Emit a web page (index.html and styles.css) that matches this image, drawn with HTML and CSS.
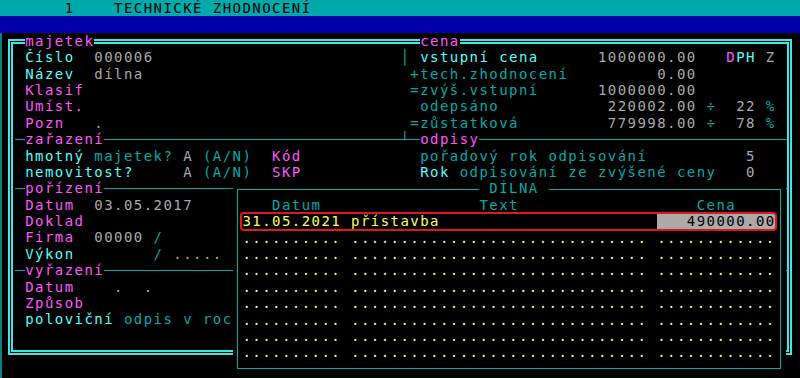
FILE: index.html
```html
<!DOCTYPE html>
<html lang="cs">
<head>
    <meta charset="UTF-8">
    <meta name="viewport" content="width=device-width, initial-scale=1.0">
    <title>Technické zhodnocení</title>
    <link rel="stylesheet" href="styles.css">
</head>
<body>
<div class="screen">
    <div class="title">      1    TECHNICKÉ ZHODNOCENÍ</div>
    <div class="menu"></div>

    <div class="desk">
        <div class="frame">
            <div class="grid">
                <div class="l"><span class="mg lbl">majetek</span></div>
                <div class="r">  <span class="mg lbl">cena</span></div>

                <div class="l"><span class="lc">Číslo</span>  <span class="gr">000006</span></div>
                <div class="r"><span class="cy">│</span> <span class="lc">vstupní cena</span>      <span class="gr">1000000.00</span>   <span class="mg">D</span><span class="lc">PH</span> <span class="gr">Z</span></div>

                <div class="l"><span class="lc">Název</span>  <span class="gr">dílna</span></div>
                <div class="r"> <span class="cy">+tech.zhodnocení</span>         <span class="gr">0.00</span></div>

                <div class="l"><span class="mg">Klasif</span></div>
                <div class="r"> <span class="cy">=zvýš.vstupní</span>      <span class="gr">1000000.00</span></div>

                <div class="l"><span class="mg">Umíst.</span></div>
                <div class="r">  <span class="cy">odepsáno</span>           <span class="gr">220002.00</span> <span class="cy">÷</span>  <span class="gr">22</span> <span class="cy">%</span></div>

                <div class="l"><span class="mg">Pozn</span>   <span class="gr">.</span></div>
                <div class="r"> <span class="cy">=zůstatková</span>         <span class="gr">779998.00</span> <span class="cy">÷</span>  <span class="gr">78</span> <span class="cy">%</span></div>

                <div class="l rule"><span class="mg lbl">zařazení</span></div>
                <div class="r rule"><span class="cy">╵</span> <span class="mg lbl">odpisy</span></div>

                <div class="l"><span class="lc">hmotný</span> <span class="cy">majetek?</span> <span class="gr">A</span> <span class="cy">(A/N)</span>  <span class="mg">Kód</span></div>
                <div class="r">  <span class="cy">pořadový rok odpisování</span>          <span class="gr">5</span></div>

                <div class="l"><span class="lc">nemovitost?</span>     <span class="gr">A</span> <span class="cy">(A/N)</span>  <span class="mg">SKP</span></div>
                <div class="r">  <span class="lc">Rok</span><span class="cy"> odpisování ze zvýšené ceny</span>   <span class="gr">0</span></div>

                <div class="l rule"><span class="mg lbl">pořízení</span></div>
                <div class="r rule"></div>

                <div class="l"><span class="mg">Datum</span>  <span class="gr">03.05.2017</span></div>
                <div class="r"></div>

                <div class="l"><span class="mg">Doklad</span></div>
                <div class="r"></div>

                <div class="l"><span class="mg">Firma</span>  <span class="gr">00000</span> <span class="cy">/</span></div>
                <div class="r"></div>

                <div class="l"><span class="lc">Výkon</span>        <span class="cy">/</span> <span class="gr">.....</span></div>
                <div class="r"></div>

                <div class="l rule"><span class="mg lbl">vyřazení</span></div>
                <div class="r rule"></div>

                <div class="l"><span class="mg">Datum</span>    <span class="gr">.</span>  <span class="gr">.</span></div>
                <div class="r"></div>

                <div class="l"><span class="mg">Způsob</span></div>
                <div class="r"></div>

                <div class="l"><span class="lc">poloviční</span> <span class="cy">odpis v roc</span></div>
                <div class="r"></div>

                <div class="l"></div>
                <div class="r"></div>
            </div>
        </div>

        <div class="dialog">
            <div class="dlg-box">
                <div class="line dlg-title">                        <span class="lbl cy"> DÍLNA </span></div>
                <div class="line cy">   Datum                Text                  Cena</div>
                <div class="line"><span class="ye">31.05.2021 přístavba</span>                      <span class="field">   490000.00</span></div>
                <div class="line ye">.......... .............................. ............</div>
                <div class="line ye">.......... .............................. ............</div>
                <div class="line ye">.......... .............................. ............</div>
                <div class="line ye">.......... .............................. ............</div>
                <div class="line ye">.......... .............................. ............</div>
                <div class="line ye">.......... .............................. ............</div>
                <div class="line ye">.......... .............................. ............</div>
                <div class="line ye">.......... .............................. ............</div>
            </div>
        </div>
    </div>

    <div class="mark"></div>
</div>
</body>
</html>
```

FILE: styles.css
```css
/* text mode screen: 80 cols of 9.875px, rows of 16.4px */
body {
    margin: 0;
    background: #000;
}
.screen {
    position: relative;
    width: 800px;
    height: 378px;
    overflow: hidden;
    background: #000;
    font-family: "DejaVu Sans Mono", monospace;
    font-size: 14px;
    line-height: 16.4px;
    letter-spacing: 1.446px;
    color: #aaaaaa;
}
.title {
    height: 16.4px;
    padding-left: 5.4px;
    background: #00aaaa;
    color: #000;
    white-space: pre;
}
.menu {
    height: 16.4px;
    background: #0000aa;
}
.desk {
    position: relative;
    box-sizing: border-box;
    height: 345.2px;
    padding-top: 6.7px;
    border-left: 2px solid #0a7f7f;
}

/* main double frame */
.frame {
    box-sizing: border-box;
    width: 783.5px;
    margin-left: 6px;
    padding-bottom: 5.6px;
    border: 5px double #3fe6e6;
}
.grid {
    display: grid;
    grid-template-columns: 387.4px 1fr;
    grid-auto-rows: 16.4px;
    margin-top: -11.7px;
}
.l, .r {
    white-space: pre;
    overflow: hidden;
}
.l {
    padding-left: 12.15px;
}
.rule {
    background: linear-gradient(#00aaaa, #00aaaa) 0 50% / 100% 1px no-repeat;
}
.l.rule {
    background-position: 2.3px 50%;
}
.lbl {
    background: #000;
}

/* DÍLNA window */
.dialog {
    position: absolute;
    left: 230.5px;
    top: 147.6px;
    box-sizing: border-box;
    width: 553px;
    height: 196.8px;
    padding: 8.2px 4.4px 0;
    background: #000;
}
.dlg-box {
    border: 1px solid #00aaaa;
    padding: 0 0 7.7px 4.5px;
}
.line {
    height: 16.4px;
    white-space: pre;
}
.dlg-title {
    margin-top: -9.2px;
}
.field {
    background: #aaaaaa;
    color: #000;
}

/* red highlight drawn over the row */
.mark {
    position: absolute;
    left: 239.8px;
    top: 212px;
    box-sizing: border-box;
    width: 537.5px;
    height: 19px;
    border: 2px solid #e3161b;
    border-radius: 4px;
}

.lc { color: #55ffff; }
.cy { color: #00aaaa; }
.mg { color: #ff55ff; }
.gr { color: #aaaaaa; }
.ye { color: #ffff55; }
```
